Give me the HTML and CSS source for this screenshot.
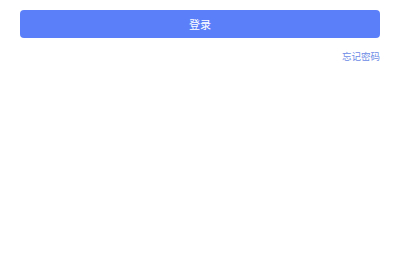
FILE: index.html
```html
<!DOCTYPE html>
<html lang="zh-CN">
<head>
    <meta charset="UTF-8">
    <meta name="viewport" content="width=device-width, initial-scale=1.0">
    <title>登录</title>
    <link rel="stylesheet" href="styles.css">
</head>
<body>
    <section class="login-actions">
        <button class="login-button">登录</button>
        <div class="login-links">
            <a class="forgot-link" href="#">忘记密码</a>
        </div>
    </section>
</body>
</html>
```

FILE: styles.css
```css
/* Reset */
body {
    margin: 0;
    padding: 0;
    background-color: #fff;
    font-family: "Noto Sans CJK SC", "Noto Sans", sans-serif;
}

/* Login actions */
.login-actions {
    padding: 10px 20px 0;
}

.login-button {
    display: block;
    width: 100%;
    height: 28px;
    border: none;
    border-radius: 4px;
    background-color: #5b7ff9;
    color: #fff;
    font-family: inherit;
    font-size: 11px;
    line-height: 28px;
    padding: 0;
}

.login-links {
    display: flex;
    justify-content: flex-end;
    margin-top: 11px;
}

.forgot-link {
    color: #6d8be6;
    font-size: 9.5px;
    line-height: 14px;
    text-decoration: none;
}
```
